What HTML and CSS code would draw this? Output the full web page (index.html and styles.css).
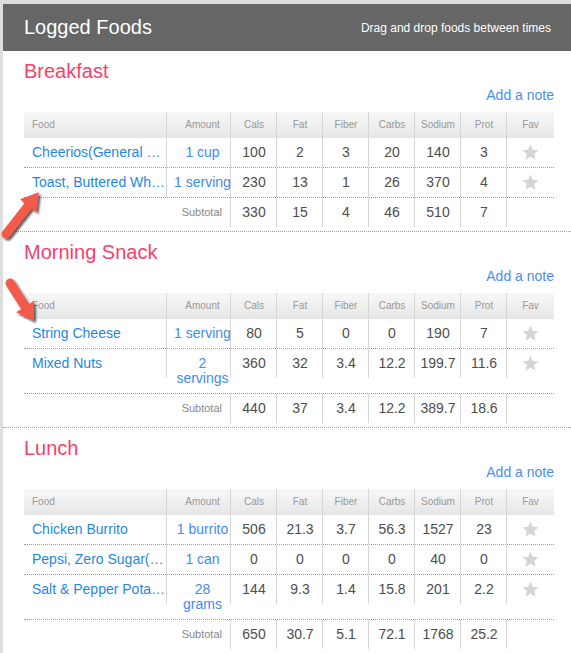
FILE: index.html
```html
<!DOCTYPE html>
<html lang="en">
<head>
    <meta charset="UTF-8">
    <title>Logged Foods</title>
    <link rel="stylesheet" href="styles.css">
</head>
<body>
    <svg width="0" height="0" style="position:absolute">
        <defs>
            <symbol id="star" viewBox="0 0 24 24">
                <polygon points="12,1.8 14.9,8.6 22.2,9.2 16.6,14 18.3,21.2 12,17.4 5.7,21.2 7.4,14 1.8,9.2 9.1,8.6"/>
            </symbol>
            <filter id="shade" x="-30%" y="-30%" width="160%" height="160%">
                <feDropShadow dx="2" dy="2" stdDeviation="1.3" flood-color="#222" flood-opacity="0.75"/>
            </filter>
        </defs>
    </svg>

    <div class="page">
        <div class="topbar">
            <h1>Logged Foods</h1>
            <span class="hint">Drag and drop foods between times</span>
        </div>

        <!-- Breakfast -->
        <section class="meal">
            <h2>Breakfast</h2>
            <div class="note"><a href="#">Add a note</a></div>
            <div class="foods">
                <div class="row head">
                    <div class="c food">Food</div><div class="c amt">Amount</div><div class="c">Cals</div><div class="c">Fat</div><div class="c">Fiber</div><div class="c">Carbs</div><div class="c">Sodium</div><div class="c">Prot</div><div class="c fav">Fav</div>
                </div>
                <div class="row item">
                    <div class="c food"><a href="#">Cheerios(General …</a></div><div class="c amt"><a href="#">1 cup</a></div><div class="c">100</div><div class="c">2</div><div class="c">3</div><div class="c">20</div><div class="c">140</div><div class="c">3</div><div class="c fav"><svg class="star"><use href="#star"/></svg></div>
                </div>
                <div class="row item">
                    <div class="c food"><a href="#">Toast, Buttered Wh…</a></div><div class="c amt"><a href="#">1 serving</a></div><div class="c">230</div><div class="c">13</div><div class="c">1</div><div class="c">26</div><div class="c">370</div><div class="c">4</div><div class="c fav"><svg class="star"><use href="#star"/></svg></div>
                </div>
                <div class="row total">
                    <div class="c label">Subtotal</div><div class="c">330</div><div class="c">15</div><div class="c">4</div><div class="c">46</div><div class="c">510</div><div class="c">7</div><div class="c fav"></div>
                </div>
            </div>
        </section>

        <!-- Morning Snack -->
        <section class="meal">
            <h2>Morning Snack</h2>
            <div class="note"><a href="#">Add a note</a></div>
            <div class="foods">
                <div class="row head">
                    <div class="c food">Food</div><div class="c amt">Amount</div><div class="c">Cals</div><div class="c">Fat</div><div class="c">Fiber</div><div class="c">Carbs</div><div class="c">Sodium</div><div class="c">Prot</div><div class="c fav">Fav</div>
                </div>
                <div class="row item">
                    <div class="c food"><a href="#">String Cheese</a></div><div class="c amt"><a href="#">1 serving</a></div><div class="c">80</div><div class="c">5</div><div class="c">0</div><div class="c">0</div><div class="c">190</div><div class="c">7</div><div class="c fav"><svg class="star"><use href="#star"/></svg></div>
                </div>
                <div class="row item">
                    <div class="c food"><a href="#">Mixed Nuts</a></div><div class="c amt"><a href="#">2 servings</a></div><div class="c">360</div><div class="c">32</div><div class="c">3.4</div><div class="c">12.2</div><div class="c">199.7</div><div class="c">11.6</div><div class="c fav"><svg class="star"><use href="#star"/></svg></div>
                </div>
                <div class="row total">
                    <div class="c label">Subtotal</div><div class="c">440</div><div class="c">37</div><div class="c">3.4</div><div class="c">12.2</div><div class="c">389.7</div><div class="c">18.6</div><div class="c fav"></div>
                </div>
            </div>
        </section>

        <!-- Lunch -->
        <section class="meal">
            <h2>Lunch</h2>
            <div class="note"><a href="#">Add a note</a></div>
            <div class="foods">
                <div class="row head">
                    <div class="c food">Food</div><div class="c amt">Amount</div><div class="c">Cals</div><div class="c">Fat</div><div class="c">Fiber</div><div class="c">Carbs</div><div class="c">Sodium</div><div class="c">Prot</div><div class="c fav">Fav</div>
                </div>
                <div class="row item">
                    <div class="c food"><a href="#">Chicken Burrito</a></div><div class="c amt"><a href="#">1 burrito</a></div><div class="c">506</div><div class="c">21.3</div><div class="c">3.7</div><div class="c">56.3</div><div class="c">1527</div><div class="c">23</div><div class="c fav"><svg class="star"><use href="#star"/></svg></div>
                </div>
                <div class="row item">
                    <div class="c food"><a href="#">Pepsi, Zero Sugar(…</a></div><div class="c amt"><a href="#">1 can</a></div><div class="c">0</div><div class="c">0</div><div class="c">0</div><div class="c">0</div><div class="c">40</div><div class="c">0</div><div class="c fav"><svg class="star"><use href="#star"/></svg></div>
                </div>
                <div class="row item">
                    <div class="c food"><a href="#">Salt &amp; Pepper Pota…</a></div><div class="c amt"><a href="#">28 grams</a></div><div class="c">144</div><div class="c">9.3</div><div class="c">1.4</div><div class="c">15.8</div><div class="c">201</div><div class="c">2.2</div><div class="c fav"><svg class="star"><use href="#star"/></svg></div>
                </div>
                <div class="row total">
                    <div class="c label">Subtotal</div><div class="c">650</div><div class="c">30.7</div><div class="c">5.1</div><div class="c">72.1</div><div class="c">1768</div><div class="c">25.2</div><div class="c fav"></div>
                </div>
            </div>
        </section>
    </div>

    <!-- annotation arrows drawn over the page -->
    <svg class="arrows" width="571" height="653" viewBox="0 0 571 653">
        <g filter="url(#shade)" fill="#f45a48">
            <path transform="translate(6 234) rotate(-51.8)" d="M0,-4.5 H36 V-10.5 L53,0 L36,10.5 V4.5 H0 A4.5,4.5 0 0 1 0,-4.5 Z"/>
            <path transform="translate(10 283) rotate(57.7)" d="M0,-4.5 H28 V-10.5 L45,0 L28,10.5 V4.5 H0 A4.5,4.5 0 0 1 0,-4.5 Z"/>
        </g>
    </svg>
</body>
</html>
```

FILE: styles.css
```css
html {
    overflow: hidden;
}
body {
    margin: 0;
    padding: 4px 0 0 3px;
    background: #dedede;
    font-family: "Liberation Sans", Arial, sans-serif;
    color: #4d4d4d;
}
a {
    text-decoration: none;
}
.page {
    background: #fff;
}
.topbar {
    height: 47px;
    display: flex;
    align-items: center;
    justify-content: space-between;
    padding: 0 20px 0 21px;
    background: #666;
    color: #fff;
}
.topbar h1 {
    margin: 0;
    font-size: 20px;
    font-weight: normal;
}
.hint {
    font-size: 12px;
}
.meal {
    padding: 8px 17px 4px 21px;
    border-bottom: 1px dotted #999;
}
.meal h2 {
    margin: 0;
    font-size: 20px;
    line-height: 24px;
    font-weight: normal;
    color: #f5416b;
}
.note {
    margin: 4px 0 8px;
    text-align: right;
    font-size: 14px;
    line-height: 17px;
}
.note a {
    color: #4a8ef0;
}
.row {
    display: grid;
    grid-template-columns: 143px 64px repeat(6, 46px) 47px;
}
.c {
    text-align: center;
    background: linear-gradient(#d6d6d6, #d6d6d6) right top / 1px 29px no-repeat;
}
.c.fav {
    background: none;
}
.head {
    height: 26px;
    background: linear-gradient(#f8f8f8, #e6e6e6);
    font-size: 10px;
    color: #999;
}
.head .c {
    line-height: 26px;
    background-size: 1px 26px;
}
.item {
    border-bottom: 1px dotted #999;
}
.item .c, .total .c {
    padding: 7px 0;
    font-size: 14px;
    line-height: 15px;
}
.row .food {
    padding-left: 8px;
    text-align: left;
    white-space: nowrap;
    overflow: hidden;
}
.row .amt {
    padding-left: 7px;
}
.food a {
    color: #1f87e2;
}
.amt a {
    color: #3f8cf2;
}
.star {
    display: block;
    width: 19px;
    height: 19px;
    margin: -2px auto;
    fill: #d5d5d5;
}
.total .label {
    grid-column: span 2;
    padding-right: 9px;
    text-align: right;
    font-size: 11px;
    color: #888;
}
.arrows {
    position: absolute;
    left: 0;
    top: 0;
    pointer-events: none;
}
```
